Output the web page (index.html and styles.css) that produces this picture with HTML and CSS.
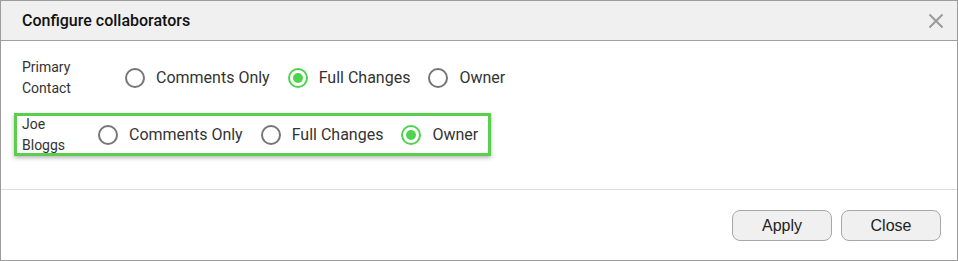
FILE: index.html
```html
<!DOCTYPE html>
<html>
<head>
<meta charset="utf-8">
<link rel="stylesheet" href="styles.css">
</head>
<body>
<div class="dialog">
  <div class="header">
    <span class="title">Configure collaborators</span>
    <svg class="close-x" width="16" height="16" viewBox="0 0 16 16"><path d="M1.5 1.5 L14.5 14.5 M14.5 1.5 L1.5 14.5" stroke="#9a9a9a" stroke-width="2" fill="none"/></svg>
  </div>
  <div class="content">
    <div class="row">
      <div class="label label-wide">Primary<br>Contact</div>
      <label class="option"><span class="radio"></span>Comments Only</label>
      <label class="option"><span class="radio checked"></span>Full Changes</label>
      <label class="option"><span class="radio"></span>Owner</label>
    </div>
    <div class="row highlighted">
      <div class="label label-narrow">Joe<br>Bloggs</div>
      <label class="option"><span class="radio"></span>Comments Only</label>
      <label class="option"><span class="radio"></span>Full Changes</label>
      <label class="option"><span class="radio checked"></span>Owner</label>
    </div>
  </div>
  <div class="footer">
    <button class="btn">Apply</button>
    <button class="btn">Close</button>
  </div>
</div>
</body>
</html>
```
FILE: styles.css
```css
html, body {
  margin: 0;
  padding: 0;
  background: #ffffff;
}
.dialog {
  box-sizing: border-box;
  width: 958px;
  height: 261px;
  border: 1px solid #9c9c9c;
  background: #ffffff;
  font-family: Roboto, "Liberation Sans", sans-serif;
  display: flex;
  flex-direction: column;
}
.header {
  height: 39px;
  background: #f0f0f0;
  border-bottom: 1px solid #a0a0a0;
  display: flex;
  align-items: center;
  justify-content: space-between;
  padding: 0 13px 0 21px;
}
.title {
  font-size: 16px;
  font-weight: 500;
  color: #111111;
  margin-top: -1px;
}
.close-x {
  display: block;
}
.content {
  padding: 15px 13px 33px 13px;
  display: flex;
  flex-direction: column;
  align-items: flex-start;
  gap: 14px;
}
.row {
  box-sizing: border-box;
  height: 43px;
  display: flex;
  align-items: center;
  padding: 0 10px 0 5px;
  border: 3px solid transparent;
}
.row.highlighted {
  border-color: #5acf4c;
  box-shadow: 0 2px 4px rgba(0, 0, 0, 0.28);
}
.label {
  font-size: 14px;
  line-height: 21px;
  color: #333333;
  flex: none;
}
.label-wide {
  width: 103px;
}
.label-narrow {
  width: 76px;
}
.option {
  display: flex;
  align-items: center;
  gap: 11px;
  font-size: 16px;
  color: #333333;
  margin-right: 18px;
}
.option:last-child {
  margin-right: 0;
}
.radio {
  box-sizing: border-box;
  width: 20px;
  height: 20px;
  border: 2px solid #767676;
  border-radius: 50%;
  display: flex;
  align-items: center;
  justify-content: center;
}
.radio.checked {
  border-color: #4fd34f;
}
.radio.checked::after {
  content: "";
  width: 10px;
  height: 10px;
  border-radius: 50%;
  background: #4fd34f;
}
.footer {
  border-top: 1px solid #dddddd;
  flex: 1;
  display: flex;
  justify-content: flex-end;
  align-items: flex-start;
  gap: 9px;
  padding: 20px 16px 0 0;
}
.btn {
  box-sizing: border-box;
  width: 100px;
  height: 31px;
  background: #f0f0f0;
  border: 1px solid #a8a8a8;
  border-radius: 8px;
  font-family: "Liberation Sans", Arial, sans-serif;
  font-size: 16px;
  color: #222222;
  padding: 0;
}
```
